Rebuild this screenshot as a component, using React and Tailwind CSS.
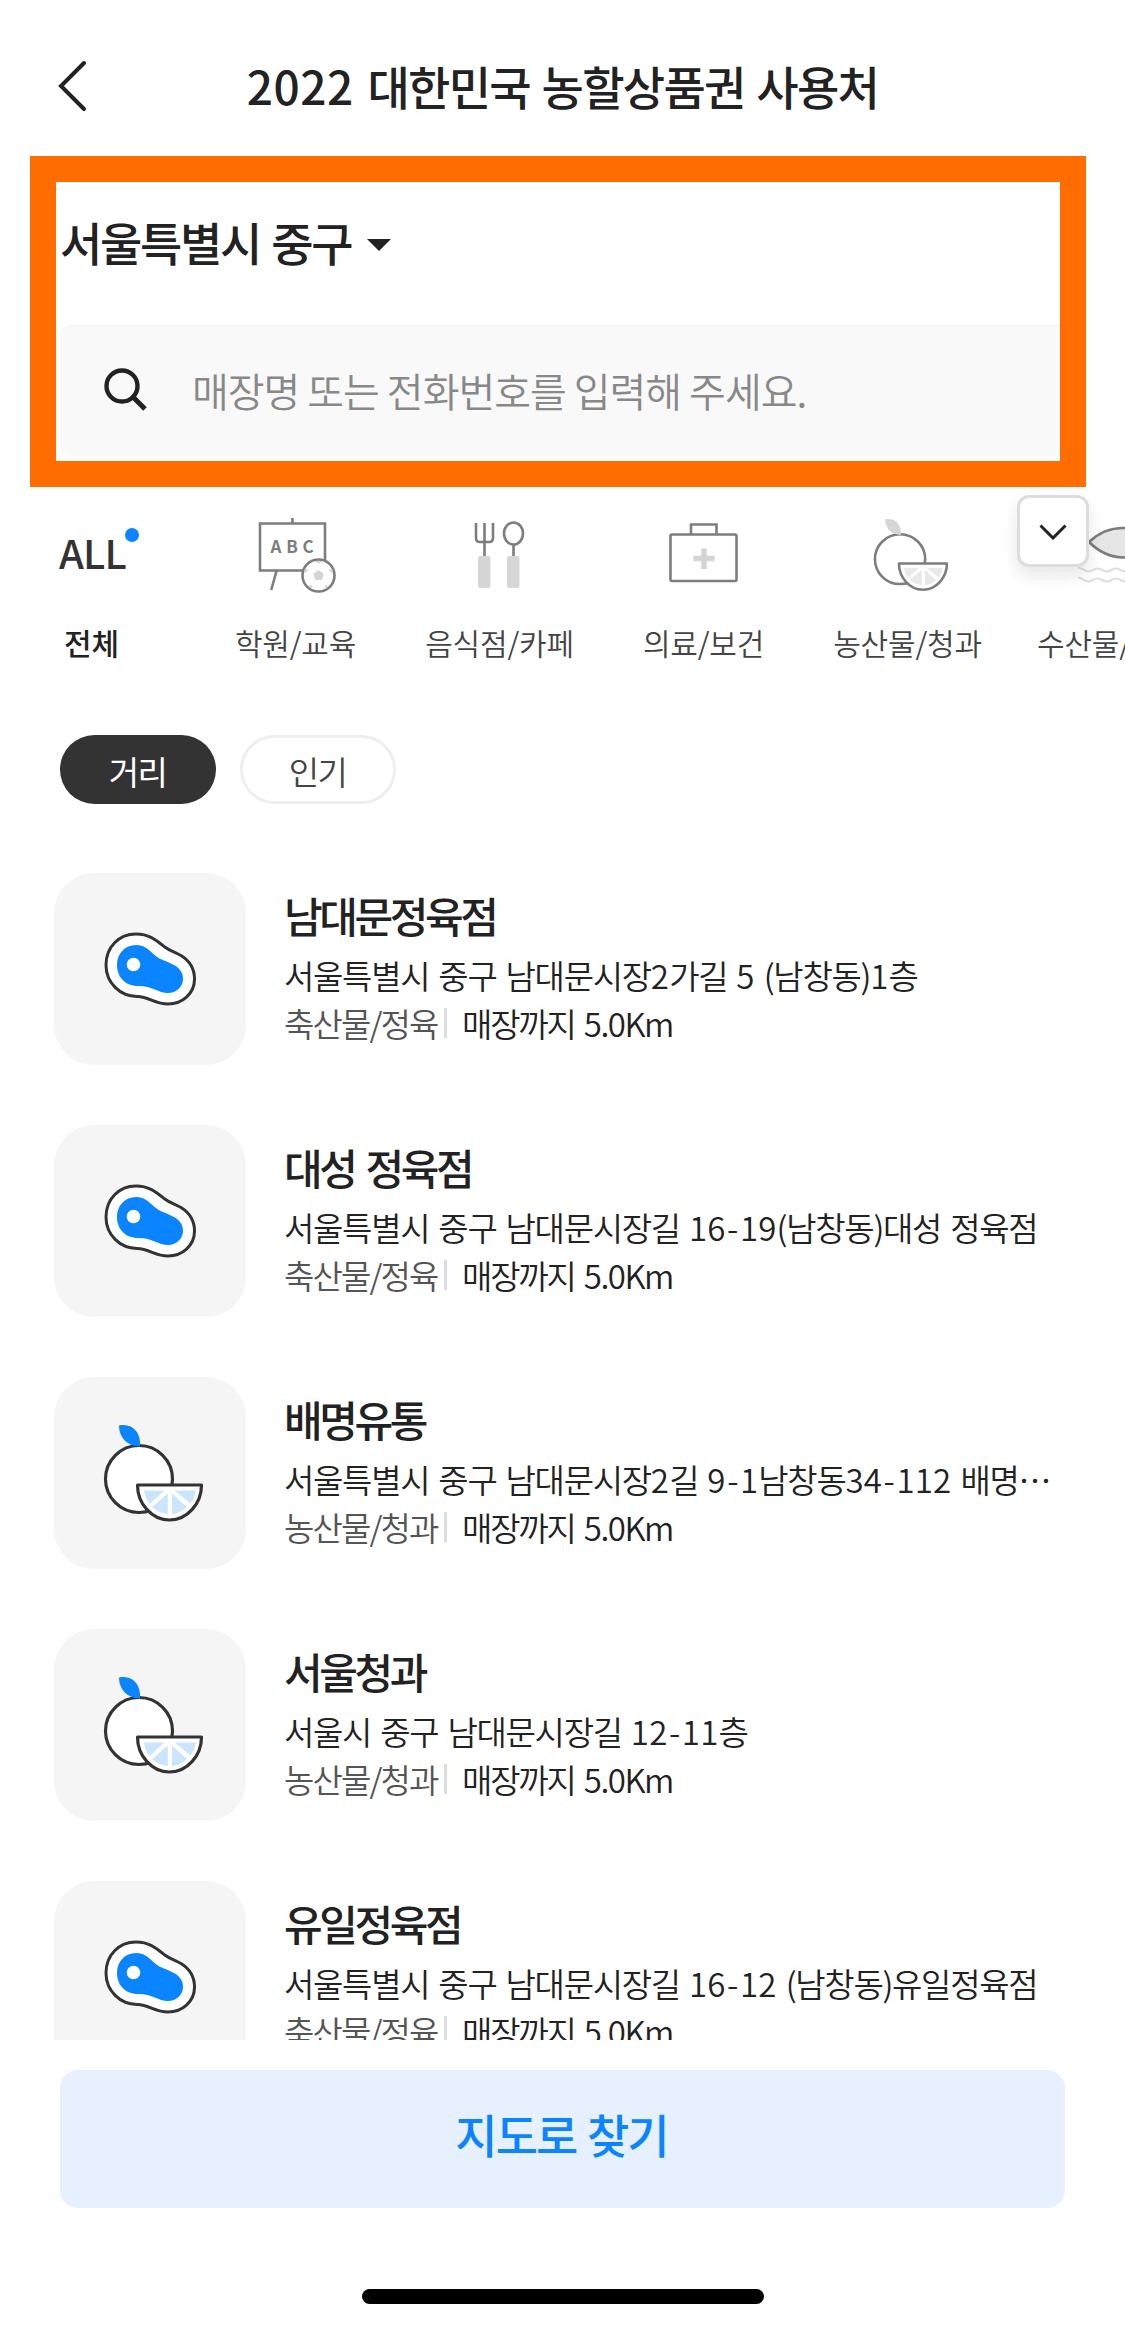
const Board = () => (
  <svg viewBox="194 510 204 90" className="h-[90px] w-[204px]" fill="none" stroke="#7d7d7d" strokeWidth="2.6">
    <path d="M260 523.5H325V570.5H260ZM292.5 518V523" />
    <path d="M276.5 571L271.5 589" strokeLinecap="round" />
    <text x="294.500" y="553" textAnchor="middle" fill="#7d7d7d" stroke="none" fontSize="17" fontWeight="700" letterSpacing="4.800" className="font-['Noto_Sans_CJK_KR']">ABC</text>
    <circle cx="318.500" cy="575.5" r="16" fill="#fff" />
    <path d="M318.500 570l5.2 3.8-2 6.2h-6.4l-2-6.2z" fill="#d4d4d4" stroke="none" />
    <path d="M314.500 561h8l-4 2.500zM304.500 569l4 .5-3 4zM332.500 569l-4 .5 3 4zM308.500 586l3.500-1-.5 4zM328.500 586l-3.500-1 .5 4z" fill="#d4d4d4" stroke="none" />
  </svg>
);

const Cutlery = () => (
  <svg viewBox="398 510 204 90" className="h-[90px] w-[204px]" fill="none" stroke="#7d7d7d" strokeWidth="2.6">
    <path d="M476 523V538Q476 542 480 542H489Q493 542 493 538V523M484.500 523V556M513.500 545V556" />
    <ellipse cx="513.500" cy="533.500" rx="9.500" ry="11" />
    <rect x="478" y="556" width="12.500" height="32" rx="2" fill="#d6d6d6" stroke="none" />
    <rect x="507" y="556" width="12.500" height="32" rx="2" fill="#d6d6d6" stroke="none" />
  </svg>
);

const Kit = () => (
  <svg viewBox="602 510 204 90" className="h-[90px] w-[204px]" fill="none" stroke="#7d7d7d" strokeWidth="2.600">
    <rect x="670.500" y="534.500" width="66" height="46.500" rx="1.500" />
    <path d="M691 534V524.500H716.500V534" />
    <path d="M704 548.500V569M693.500 558.500H714.500" stroke="#d4d4d4" strokeWidth="5.500" />
  </svg>
);

function FruitShape({ line, leaf, wedge, width }) {
  return (
    <g fill="#fff" stroke={line} strokeWidth={width}>
      <circle cx="34.500" cy="54" r="33.500" />
      <path d="M14.500 0.500C28 -2 36.500 7 35.500 21.500C22 21 14.500 12 14.500 0.500Z" fill={leaf} stroke="none" />
      <path d="M33 60H97C97 78.500 83 95 65 95S33 78.500 33 60Z" strokeLinejoin="round" />
      <path d="M39.500 65.500H60L45 79Q40.500 73 39.500 65.500ZM70 65.500H91.500Q90 73 86 78.500ZM63.300 68.500V89Q54 88 47.500 82ZM67.500 68.500V89Q76 88 82.500 82Z" fill={wedge} stroke="none" />
    </g>
  );
}

const Fruit = () => (
  <svg viewBox="806 510 204 90" className="h-[90px] w-[204px]">
    <g transform="translate(874.200 518.900) scale(.750 .745)">
      <FruitShape line="#7d7d7d" leaf="#d6d6d6" wedge="#e8e8e8" width="3.400" />
    </g>
  </svg>
);

const Fish = () => (
  <svg viewBox="1010 510 204 90" className="h-[90px] w-[204px]" fill="none">
    <path d="M1089 542Q1104 528 1123 528Q1143 528 1157 542Q1143 557 1123 557.500Q1104 557 1089 542Z" fill="#e6e6e6" stroke="#7d7d7d" strokeWidth="2.600" />
    <path d="M1078 567.500C1083 568 1084 571.500 1088.500 571.500S1093.500 568.500 1097.500 568.500S1103 571.500 1107 571.500S1112 568.500 1116 568.500S1121 571.500 1126 571.500M1078 577.500C1083 578 1084 581.500 1088.500 581.500S1093.500 578.500 1097.500 578.500S1103 581.500 1107 581.500S1112 578.500 1116 578.500S1121 581.500 1126 581.500" stroke="#dedede" strokeWidth="2.200" />
  </svg>
);

const All = () => (
  <div className="relative h-[90px] w-[204px]">
    <span className="absolute left-[69px] top-[12px] text-[40px] font-medium leading-[60px] tracking-[-0.800px] text-[#333]">ALL</span>
    <i className="absolute left-[135px] top-[18px] h-[14px] w-[14px] rounded-full bg-[#0a84ff]" />
  </div>
);

const categories = [
  { name: "전체", Icon: All, label: "text-center font-medium" },
  { name: "학원/교육", Icon: Board, label: "text-center font-[350] text-[#444]" },
  { name: "음식점/카페", Icon: Cutlery, label: "text-center font-[350] text-[#444]" },
  { name: "의료/보건", Icon: Kit, label: "text-center font-[350] text-[#444]" },
  { name: "농산물/청과", Icon: Fruit, label: "text-center font-[350] text-[#444]" },
  { name: "수산물/", Icon: Fish, label: "pl-[28px] font-[350] text-[#444]" },
];

const Steak = () => (
  <svg viewBox="0 0 192 192" className="h-[192px] w-[192px]">
    <path d="M82 61C95 61 102 67 110 73.500C116 78 121 79 127 82.500C135 87.500 140.500 95 140.500 106C140.500 121 128 131 114 131C101 131 96 124 83 123.500C66 123 52 110 52 92C52 74 65 61 82 61Z" fill="#fff" stroke="#333" strokeWidth="3" />
    <path d="M82 72C90 72 94 76 100 81.500C106 87 113 88 120 92C126 95.500 129 100 129 106C129 114 122 120 114 120C104 120 99 113 84 113C72 113 63 104.500 63 92C63 80.500 71 72 82 72Z" fill="#0a84ff" />
    <circle cx="79.500" cy="91.500" r="6.800" fill="#fff" />
  </svg>
);

const Orange = () => (
  <svg viewBox="0 0 192 192" className="h-[192px] w-[192px]">
    <g transform="translate(50.500 48)">
      <FruitShape line="#333" leaf="#0a84ff" wedge="#cce5ff" width="3.200" />
    </g>
  </svg>
);

const stores = [
  { name: "남대문정육점", address: "서울특별시 중구 남대문시장2가길 5 (남창동)1층", kind: "축산물/정육", Icon: Steak },
  { name: "대성 정육점", address: "서울특별시 중구 남대문시장길 16-19(남창동)대성 정육점", kind: "축산물/정육", Icon: Steak },
  { name: "배명유통", address: "서울특별시 중구 남대문시장2길 9-1남창동34-112 배명⋯", kind: "농산물/청과", Icon: Orange },
  { name: "서울청과", address: "서울시 중구 남대문시장길 12-11층", kind: "농산물/청과", Icon: Orange },
  { name: "유일정육점", address: "서울특별시 중구 남대문시장길 16-12 (남창동)유일정육점", kind: "축산물/정육", Icon: Steak },
];

// Digits and hyphens are set looser than the Hangul around them.
function Address({ text }) {
  return text.split(/(\d+|-)/).map((part, i) => {
    if (part === "-") return <span key={i} className="mx-[1.5px] tracking-[0px]">-</span>;
    if (/^\d+$/.test(part)) return <span key={i} className="tracking-[0.200px]">{part}</span>;
    return part;
  });
}

function Store({ name, address, kind, Icon }) {
  return (
    <li className="flex h-[252px] shrink-0 items-start">
      <div className="h-[192px] w-[192px] shrink-0 rounded-[40px] bg-[#f5f5f5]">
        <Icon />
      </div>
      <div className="ml-[38px] whitespace-nowrap pt-[11px] text-[#222]">
        <h2 className="h-[62px] text-[42px] font-medium leading-[62px] tracking-[-3.400px] [word-spacing:5px]">{name}</h2>
        <p className="mt-[5px] h-[48px] text-[33px] font-[350] leading-[48px] tracking-[-1.300px] [word-spacing:3px]"><Address text={address} /></p>
        <div className="flex h-[48px] items-center text-[33px] font-[350] leading-[48px] tracking-[-1.900px]">
          <span className="w-[160px] text-[#555]">{kind}</span>
          <i className="h-[30px] w-[3px] bg-[#ddd]" />
          <span className="ml-[15px] tracking-[-2.200px] [word-spacing:4px]">매장까지 <span className="tracking-[-1.500px]">5.0Km</span></span>
        </div>
      </div>
    </li>
  );
}

export default function App() {
  return (
    <main className="flex h-[2328px] w-[1125px] flex-col overflow-hidden bg-white font-['Noto_Sans_CJK_KR',sans-serif] text-[#222]">
      <header className="relative flex h-[156px] shrink-0 items-center justify-center pt-[14px]">
        <svg viewBox="0 0 30 52" className="absolute left-[57px] top-[60px] h-[52px] w-[30px]" fill="none" stroke="#222" strokeWidth="4">
          <path d="M27 3L4 26L27 49" strokeLinecap="round" />
        </svg>
        <h1 className="whitespace-nowrap text-[46px] font-medium leading-[67px] tracking-[-1.700px] [word-spacing:3px]"><span className="tracking-[0.500px]">2022 </span>대한민국 농할상품권 사용처</h1>
      </header>

      <section className="ml-[30px] h-[331px] w-[1056px] shrink-0 border-[26px] border-[#ff6c00] pl-[4px]">
        <button className="flex h-[142px] items-center pb-[24px]">
          <span className="whitespace-nowrap text-[46px] font-medium leading-[68px] tracking-[-2.300px] [word-spacing:3px]">서울특별시 중구</span>
          <svg viewBox="0 0 24 12" className="ml-[16px] mt-[8px] h-[12px] w-[24px]">
            <path d="M0 0H24L12 12Z" fill="#222" />
          </svg>
        </button>
        <div className="flex h-[132px] items-center rounded-l-[12px] bg-[#f9f9f9] pl-[44px]">
          <svg viewBox="0 0 44 44" className="h-[44px] w-[44px]" fill="none" stroke="#222" strokeWidth="4.400">
            <circle cx="18" cy="18" r="15.500" />
            <path d="M29 29L41 41" strokeWidth="5" />
          </svg>
          <span className="ml-[44px] whitespace-nowrap text-[40px] font-[350] leading-[60px] tracking-[-1px] text-[#888]">매장명 또는 전화번호를 입력해 주세요.</span>
        </div>
      </section>

      <nav className="relative h-[248px] shrink-0 overflow-hidden pt-[23px]">
        <div className="-ml-[10px] flex">
          {categories.map(({ name, Icon, label }) => (
            <div key={name} className="flex w-[204px] shrink-0 flex-col">
              <Icon />
              <span className="-ml-px mt-[18px] text-[30px] leading-[48px] tracking-[-0.200px]"><span className={"block " + label}>{name}</span></span>
            </div>
          ))}
        </div>
        <button className="absolute left-[1017px] top-[8px] flex h-[72px] w-[72px] items-center justify-center rounded-[12px] border-[3px] border-[#ddd] bg-white shadow-[0_8px_18px_rgba(0,0,0,0.1)]">
          <svg viewBox="0 0 28 16" className="mt-[2px] h-[16px] w-[28px]" fill="none" stroke="#222" strokeWidth="3">
            <path d="M1.500 1.500L14 14L26.500 1.500" />
          </svg>
        </button>
      </nav>

      <div className="flex h-[69px] shrink-0 gap-[24px] pl-[60px] text-[33px] leading-[48px] tracking-[-1.500px]">
        <button className="flex w-[156px] items-center justify-center rounded-full bg-[#333] pr-[1px] pt-[3px] text-white">거리</button>
        <button className="flex w-[156px] items-center justify-center rounded-full border-[3px] border-[#eee] pr-[1px] pt-[3px] font-[350] text-[#444]">인기</button>
      </div>

      <ul className="mt-[69px] flex h-[1167px] shrink-0 flex-col overflow-hidden pl-[54px]">
        {stores.map((s) => (
          <Store key={s.name} {...s} />
        ))}
      </ul>

      <button className="ml-[60px] mt-[30px] flex h-[138px] w-[1005px] shrink-0 items-center justify-center rounded-[18px] bg-[#e6f0ff] pb-[11px] pr-[2px] text-[46px] font-medium tracking-[-1.900px] text-[#0a84ff] [word-spacing:2px]">지도로 찾기</button>
      <div className="ml-[362px] mt-[81px] h-[15px] w-[402px] shrink-0 rounded-full bg-black" />
    </main>
  );
}
